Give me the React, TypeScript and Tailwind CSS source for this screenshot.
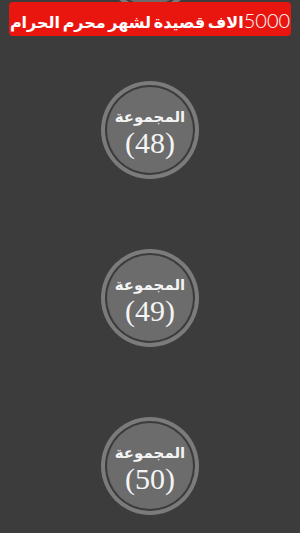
import React from 'react';

const groups = [47, 48, 49, 50, 51];

const GroupBadge = ({ n }: { n: number }) => (
  <div className="h-[168px] flex items-center justify-center shrink-0">
    <div className="w-[98px] h-[98px] rounded-full bg-[#7b7b7b] p-[4px]">
      <div className="w-full h-full rounded-full bg-[#3c3c3c] p-[2px]">
        <div className="w-full h-full rounded-full bg-[#6c6c6c] flex flex-col items-center pt-[23px]">
          <span
            dir="rtl"
            className="text-[15px] font-bold text-[#f4f4f4] leading-none"
            style={{ fontFamily: '"DejaVu Sans", sans-serif' }}
          >
            المجموعة
          </span>
          <span
            className="text-[30px] text-[#f4f4f4] leading-none mt-[3px]"
            style={{ fontFamily: '"Liberation Serif", serif' }}
          >
            ({n})
          </span>
        </div>
      </div>
    </div>
  </div>
);

export default function App() {
  return (
    <div className="relative w-[300px] h-[533px] overflow-hidden bg-[#3c3c3c]">
      <div className="flex flex-col mt-[-122px]">
        {groups.map((n) => (
          <GroupBadge key={n} n={n} />
        ))}
      </div>

      <div className="absolute left-[9px] right-[9px] top-[2px] h-[34px] rounded-[4px] bg-[#e8160f] flex items-center justify-center overflow-hidden">
        <p dir="rtl" className="text-white whitespace-nowrap leading-none flex items-baseline pt-[2px]">
          <span
            className="text-[20px] font-light"
            style={{ fontFamily: 'Lato, "Open Sans", sans-serif' }}
          >
            5000
          </span>
          <span
            className="text-[16px] font-bold"
            style={{ fontFamily: '"DejaVu Sans", sans-serif', wordSpacing: '-3px' }}
          >
            الاف قصيدة لشهر محرم الحرام
          </span>
        </p>
      </div>
    </div>
  );
}
